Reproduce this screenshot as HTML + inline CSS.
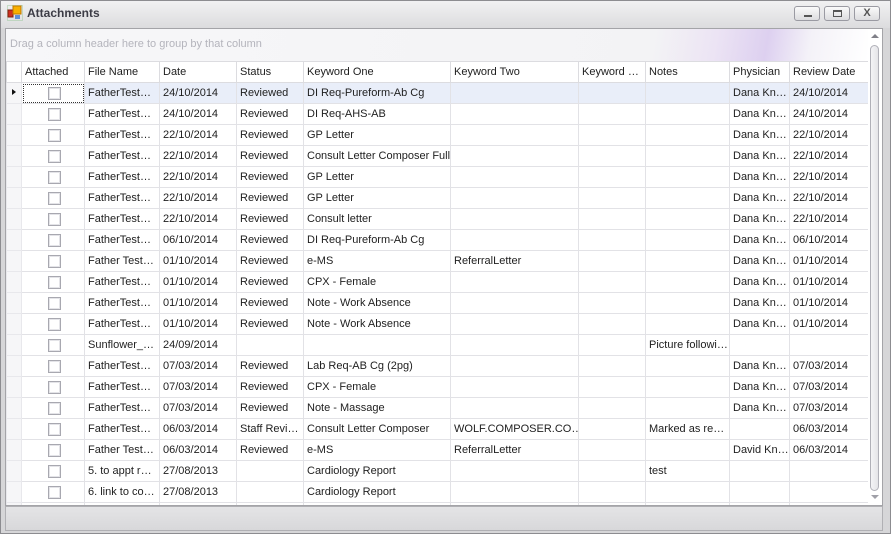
<!DOCTYPE html>
<html><head><meta charset="utf-8"><style>
*{margin:0;padding:0;box-sizing:border-box}
body{width:891px;height:534px;overflow:hidden;background:#d4d4d6;font-family:"Liberation Sans",sans-serif;font-size:11px;color:#1e1e1e;position:relative}
.win{position:absolute;left:0;top:0;width:891px;height:534px;border:1px solid #8c8c90;background:linear-gradient(#f1f1f2,#dcdcde 27px,#d6d6d8 27px)}
.title{position:absolute;left:26px;top:5px;font-weight:bold;color:#3c3c46;font-size:12px}
.btn{position:absolute;top:5px;width:26px;height:15px;border:1px solid #9a9aa2;border-radius:3px;background:linear-gradient(#fafafa,#dcdcdf)}
.grid{position:absolute;left:4px;top:27px;width:878px;height:478px;border:1px solid #a4a4a8;background:#fff;overflow:hidden}
.group{position:absolute;left:0;top:0;width:862px;height:32px;background:linear-gradient(100deg,#f7f7f9 0%,#f3f3f5 75%,#ece4f4 82%,#ddd0f0 88%,#f4f2f8 93%,#fff 100%);color:#b4b4bc;padding:9px 0 0 4px}
table{position:absolute;left:0;top:32px;border-collapse:collapse;table-layout:fixed;width:862px}
td{height:21px;border:1px solid #e2e2e6;padding:0 0 0 3px;white-space:nowrap;overflow:hidden;line-height:19px}
tr.h td{background:#fff;border-color:#dcdce0}
td.i{background:#f6f6f8;border-color:#e8e8ec;padding:0 0 0 3px}
tr.s td{background:#e9eef9}
.cb{display:block;margin:0 auto;width:13px;height:13px;border:1px solid #a8a8b0;background:#fff;box-shadow:inset 0 0 0 1px #e4e4e8}
.sb{position:absolute;left:862px;top:0;width:15px;height:478px;background:#fff}
.thumb{position:absolute;left:2px;top:16px;width:9px;height:446px;border:1px solid #b0b0b8;border-radius:5px;background:linear-gradient(90deg,#f4f4f6,#e4e4e8)}
.bot{position:absolute;left:4px;top:505px;width:878px;height:25px;border:1px solid #b0b0b4;background:linear-gradient(#e4e4e6,#d8d8da)}
</style></head><body>
<div class="win">
<svg style="position:absolute;left:6px;top:4px" width="16" height="16"><rect x="0.5" y="0.5" width="15" height="15" fill="none" stroke="#9cc89c" stroke-dasharray="1,1"/><rect x="1" y="5" width="5" height="7" fill="#d03020" stroke="#802010"/><rect x="6" y="1" width="8" height="8" fill="#f8b000" stroke="#c07800"/><rect x="8" y="10" width="5" height="4" fill="#6090d8"/></svg>
<div class="title">Attachments</div>
<div class="btn" style="left:793px"><div style="position:absolute;left:9px;top:8px;width:8px;height:2px;background:#555"></div></div>
<div class="btn" style="left:823px"><div style="position:absolute;left:8px;top:3px;width:9px;height:7px;border:1px solid #555;border-top-width:2px"></div></div>
<div class="btn" style="left:853px;font-weight:bold;color:#555;text-align:center;line-height:13px;font-size:11px">X</div>
<div class="grid">
<div class="group">Drag a column header here to group by that column</div>
<table>
<colgroup><col style="width:15px"><col style="width:63px"><col style="width:75px"><col style="width:77px"><col style="width:67px"><col style="width:147px"><col style="width:128px"><col style="width:67px"><col style="width:84px"><col style="width:60px"><col style="width:79px"></colgroup>
<tr class="h"><td class="i"></td><td>Attached</td><td>File Name</td><td>Date</td><td>Status</td><td>Keyword One</td><td>Keyword Two</td><td>Keyword …</td><td>Notes</td><td>Physician</td><td>Review Date</td></tr>
<tr class="s"><td class="i" style="background:#f6f6f8"><svg width="8" height="8"><path d="M2 1L6 4L2 7Z" fill="#111"/></svg></td><td style="background:#fff;outline:1px dotted #333;outline-offset:-2px"><span class="cb"></span></td><td>FatherTest…</td><td>24/10/2014</td><td>Reviewed</td><td>DI Req-Pureform-Ab Cg</td><td></td><td></td><td></td><td>Dana Kn…</td><td>24/10/2014</td></tr>
<tr><td class="i"></td><td><span class="cb"></span></td><td>FatherTest…</td><td>24/10/2014</td><td>Reviewed</td><td>DI Req-AHS-AB</td><td></td><td></td><td></td><td>Dana Kn…</td><td>24/10/2014</td></tr>
<tr><td class="i"></td><td><span class="cb"></span></td><td>FatherTest…</td><td>22/10/2014</td><td>Reviewed</td><td>GP Letter</td><td></td><td></td><td></td><td>Dana Kn…</td><td>22/10/2014</td></tr>
<tr><td class="i"></td><td><span class="cb"></span></td><td>FatherTest…</td><td>22/10/2014</td><td>Reviewed</td><td>Consult Letter Composer Full</td><td></td><td></td><td></td><td>Dana Kn…</td><td>22/10/2014</td></tr>
<tr><td class="i"></td><td><span class="cb"></span></td><td>FatherTest…</td><td>22/10/2014</td><td>Reviewed</td><td>GP Letter</td><td></td><td></td><td></td><td>Dana Kn…</td><td>22/10/2014</td></tr>
<tr><td class="i"></td><td><span class="cb"></span></td><td>FatherTest…</td><td>22/10/2014</td><td>Reviewed</td><td>GP Letter</td><td></td><td></td><td></td><td>Dana Kn…</td><td>22/10/2014</td></tr>
<tr><td class="i"></td><td><span class="cb"></span></td><td>FatherTest…</td><td>22/10/2014</td><td>Reviewed</td><td>Consult letter</td><td></td><td></td><td></td><td>Dana Kn…</td><td>22/10/2014</td></tr>
<tr><td class="i"></td><td><span class="cb"></span></td><td>FatherTest…</td><td>06/10/2014</td><td>Reviewed</td><td>DI Req-Pureform-Ab Cg</td><td></td><td></td><td></td><td>Dana Kn…</td><td>06/10/2014</td></tr>
<tr><td class="i"></td><td><span class="cb"></span></td><td>Father Test…</td><td>01/10/2014</td><td>Reviewed</td><td>e-MS</td><td>ReferralLetter</td><td></td><td></td><td>Dana Kn…</td><td>01/10/2014</td></tr>
<tr><td class="i"></td><td><span class="cb"></span></td><td>FatherTest…</td><td>01/10/2014</td><td>Reviewed</td><td>CPX - Female</td><td></td><td></td><td></td><td>Dana Kn…</td><td>01/10/2014</td></tr>
<tr><td class="i"></td><td><span class="cb"></span></td><td>FatherTest…</td><td>01/10/2014</td><td>Reviewed</td><td>Note - Work Absence</td><td></td><td></td><td></td><td>Dana Kn…</td><td>01/10/2014</td></tr>
<tr><td class="i"></td><td><span class="cb"></span></td><td>FatherTest…</td><td>01/10/2014</td><td>Reviewed</td><td>Note - Work Absence</td><td></td><td></td><td></td><td>Dana Kn…</td><td>01/10/2014</td></tr>
<tr><td class="i"></td><td><span class="cb"></span></td><td>Sunflower_…</td><td>24/09/2014</td><td></td><td></td><td></td><td></td><td>Picture followi…</td><td></td><td></td></tr>
<tr><td class="i"></td><td><span class="cb"></span></td><td>FatherTest…</td><td>07/03/2014</td><td>Reviewed</td><td>Lab Req-AB Cg (2pg)</td><td></td><td></td><td></td><td>Dana Kn…</td><td>07/03/2014</td></tr>
<tr><td class="i"></td><td><span class="cb"></span></td><td>FatherTest…</td><td>07/03/2014</td><td>Reviewed</td><td>CPX - Female</td><td></td><td></td><td></td><td>Dana Kn…</td><td>07/03/2014</td></tr>
<tr><td class="i"></td><td><span class="cb"></span></td><td>FatherTest…</td><td>07/03/2014</td><td>Reviewed</td><td>Note - Massage</td><td></td><td></td><td></td><td>Dana Kn…</td><td>07/03/2014</td></tr>
<tr><td class="i"></td><td><span class="cb"></span></td><td>FatherTest…</td><td>06/03/2014</td><td>Staff Revi…</td><td>Consult Letter Composer</td><td>WOLF.COMPOSER.CO…</td><td></td><td>Marked as re…</td><td></td><td>06/03/2014</td></tr>
<tr><td class="i"></td><td><span class="cb"></span></td><td>Father Test…</td><td>06/03/2014</td><td>Reviewed</td><td>e-MS</td><td>ReferralLetter</td><td></td><td></td><td>David Kn…</td><td>06/03/2014</td></tr>
<tr><td class="i"></td><td><span class="cb"></span></td><td>5. to appt r…</td><td>27/08/2013</td><td></td><td>Cardiology Report</td><td></td><td></td><td>test</td><td></td><td></td></tr>
<tr><td class="i"></td><td><span class="cb"></span></td><td>6. link to co…</td><td>27/08/2013</td><td></td><td>Cardiology Report</td><td></td><td></td><td></td><td></td><td></td></tr>
<tr><td class="i"></td><td></td><td></td><td></td><td></td><td></td><td></td><td></td><td></td><td></td><td></td></tr>
</table>
<div class="sb"><svg style="position:absolute;left:3px;top:5px" width="8" height="5"><path d="M0 4L4 0L8 4Z" fill="#808088"/></svg><div class="thumb"></div><svg style="position:absolute;left:3px;top:466px" width="8" height="5"><path d="M0 0L4 4L8 0Z" fill="#a0a0a8"/></svg></div>
</div>
<div class="bot"></div>
</div>
</body></html>
